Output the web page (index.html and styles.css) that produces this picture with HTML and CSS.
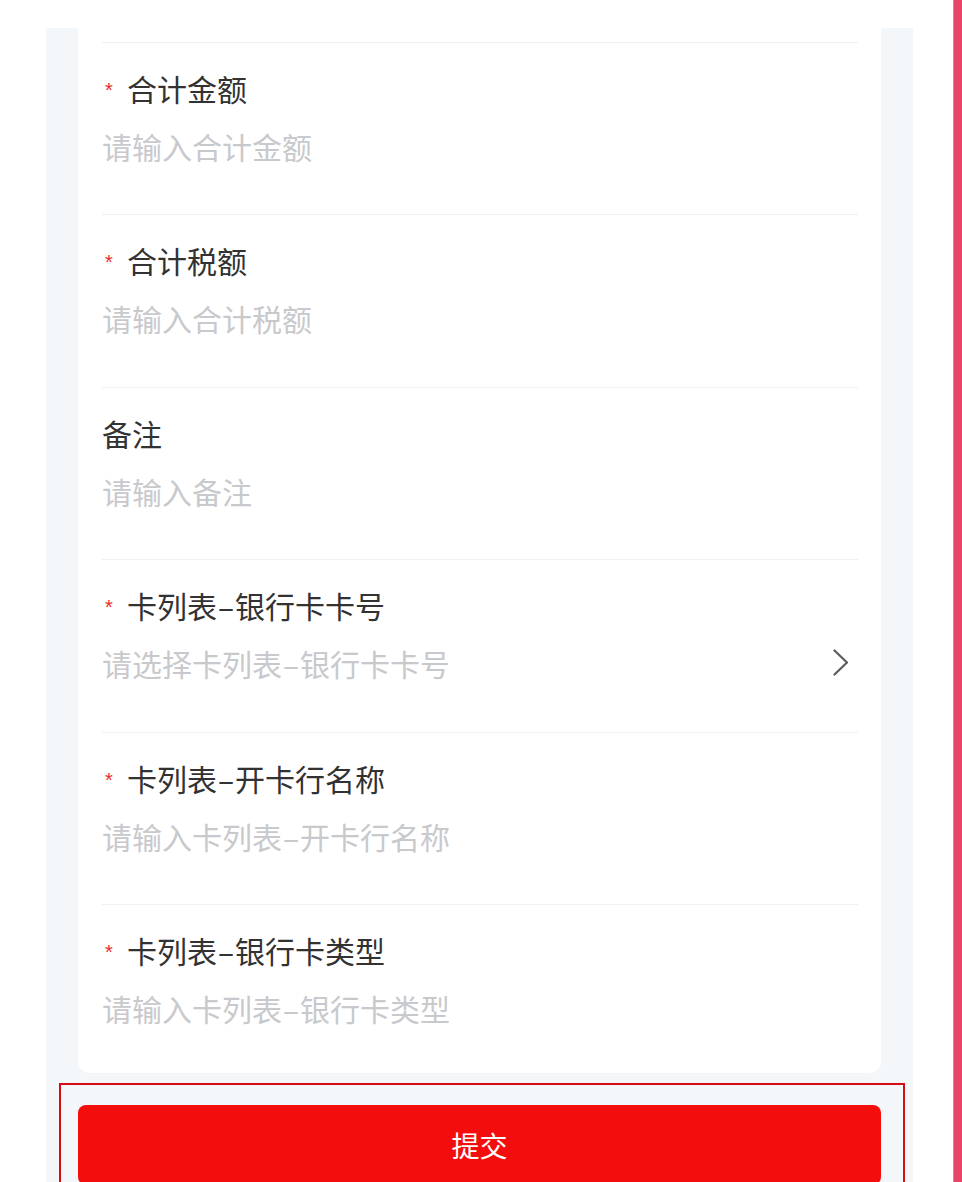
FILE: index.html
```html
<!DOCTYPE html>
<html lang="zh-CN">
<head>
<meta charset="utf-8">
<title>表单</title>
<link rel="stylesheet" href="styles.css">
</head>
<body>
<div class="screen">
  <div class="phone">
    <div class="card">
      <div class="row">
        <div class="label"><span class="req">*</span>合计金额</div>
        <div class="value"><span class="ph">请输入合计金额</span></div>
      </div>
      <div class="row">
        <div class="label"><span class="req">*</span>合计税额</div>
        <div class="value"><span class="ph">请输入合计税额</span></div>
      </div>
      <div class="row">
        <div class="label">备注</div>
        <div class="value"><span class="ph">请输入备注</span></div>
      </div>
      <div class="row">
        <div class="label"><span class="req">*</span>卡列表<span class="dash">–</span>银行卡卡号</div>
        <div class="value"><span class="ph">请选择卡列表<span class="dash">–</span>银行卡卡号</span>
          <svg class="arrow" width="16" height="28" viewBox="0 0 16 28"><path d="M1.5 1.5 L14 13.5 L1.5 25.5" fill="none" stroke="#5a5b5e" stroke-width="2.2" stroke-linecap="round" stroke-linejoin="round"/></svg>
        </div>
      </div>
      <div class="row">
        <div class="label"><span class="req">*</span>卡列表<span class="dash">–</span>开卡行名称</div>
        <div class="value"><span class="ph">请输入卡列表<span class="dash">–</span>开卡行名称</span></div>
      </div>
      <div class="row last">
        <div class="label"><span class="req">*</span>卡列表<span class="dash">–</span>银行卡类型</div>
        <div class="value"><span class="ph">请输入卡列表<span class="dash">–</span>银行卡类型</span></div>
      </div>
    </div>
    <div class="footer">
      <button class="submit">提交</button>
    </div>
  </div>
  <div class="edge"></div>
</div>
</body>
</html>
```
FILE: styles.css
```css
html, body {
  margin: 0;
  padding: 0;
  background: #ffffff;
}
body {
  width: 962px;
  height: 1182px;
  overflow: hidden;
  font-family: "Noto Sans CJK SC", "Noto Sans", sans-serif;
}
.screen {
  display: flex;
  height: 1182px;
}
.phone {
  flex: none;
  width: 867px;
  margin-left: 46px;
  margin-top: 28px;
  background: #f4f7fa;
}
.card {
  margin: 0 32px;
  background: #ffffff;
  border-radius: 0 0 12px 12px;
  padding-top: 14px;
}
.row {
  margin: 0 23px 0 24px;
  border-top: 1px solid #eef0f3;
  padding-top: 25px;
  padding-bottom: 48.4px;
}
.row.last {
  padding-bottom: 45px;
}
.label {
  font-size: 30px;
  line-height: 40px;
  color: #323233;
  display: flex;
  align-items: center;
}
.req {
  display: inline-block;
  width: 25px;
  font-family: "Liberation Sans", sans-serif;
  font-size: 20px;
  line-height: 40px;
  color: #ec2a2a;
  padding-left: 3px;
  box-sizing: border-box;
  position: relative;
  top: 2px;
}
.dash {
  display: inline-block;
  width: 18px;
  text-align: center;
}
.value {
  margin-top: 18px;
  font-size: 30px;
  line-height: 40px;
  display: flex;
  align-items: center;
  justify-content: space-between;
}
.ph {
  color: #c8c9cc;
}
.arrow {
  display: block;
  margin-right: 9px;
}
.footer {
  margin: 10px 0 0 13px;
  width: 846px;
  box-sizing: border-box;
  border: 2px solid #d40d12;
  padding: 20px 22px 20px 17px;
}
.submit {
  display: block;
  width: 100%;
  height: 80px;
  border: none;
  border-radius: 8px;
  background: #f40d0d;
  color: #ffffff;
  font-family: "Noto Sans CJK SC", sans-serif;
  font-size: 28px;
  padding: 0;
}
.edge {
  flex: none;
  width: 8px;
  margin-left: auto;
  background: #e9436a;
  border-left: 1px solid #f17a8e;
}
```
